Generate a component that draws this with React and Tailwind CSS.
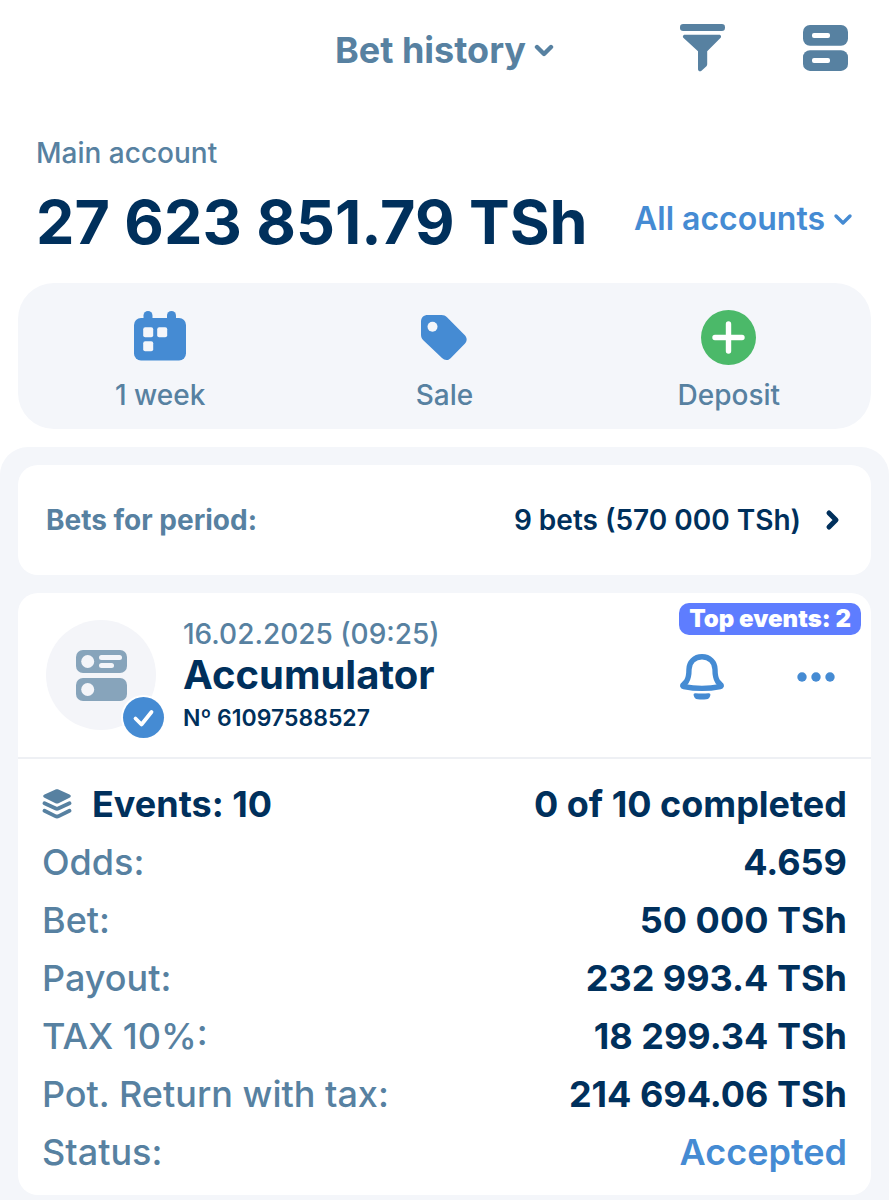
import React from "react";

const betDetails = [
  { label: "Odds:", value: "4.659" },
  { label: "Bet:", value: "50 000 TSh" },
  { label: "Payout:", value: "232 993.4 TSh" },
  { label: "TAX 10%:", value: "18 299.34 TSh" },
  { label: "Pot. Return with tax:", value: "214 694.06 TSh" },
  { label: "Status:", value: "Accepted", accent: true },
];

function ChevronDown({ className, strokeWidth }) {
  return (
    <svg viewBox="0 0 20 14" fill="none" className={className} aria-hidden="true">
      <path
        d="M3 4l7 7 7-7"
        stroke="currentColor"
        strokeWidth={strokeWidth}
        strokeLinecap="round"
        strokeLinejoin="round"
      />
    </svg>
  );
}

function FilterIcon() {
  return (
    <svg viewBox="0 0 45 48" fill="currentColor" className="w-[45px] h-12" aria-hidden="true">
      <rect x="0" y="0" width="45" height="7" rx="3.2" />
      <path d="M5 10.7h34c2 0 2.8 2 1.4 3.4L27.2 27.2V40c0 1.200-.4 2-1.300 2.800l-4.400 3.900c-1.300 1.100-3.500.4-3.500-1.500V27.200L3.600 14.100C2.200 12.700 3 10.700 5 10.700z" />
    </svg>
  );
}

function DrawersIcon() {
  return (
    <svg viewBox="0 0 45 46" fill="currentColor" className="w-[45px] h-[46px]" aria-hidden="true">
      <rect x="0" y="0" width="45" height="20.7" rx="7" />
      <rect x="0" y="25.2" width="45" height="20.7" rx="7" />
      <rect x="9" y="8" width="18" height="5" rx="2" fill="#fff" />
      <rect x="9" y="33" width="18" height="5" rx="2" fill="#fff" />
    </svg>
  );
}

function CalendarIcon() {
  return (
    <svg viewBox="0 0 52 53" className="w-[52px] h-[53px]" aria-hidden="true">
      <g fill="#458bd3">
        <rect x="9.5" y="0" width="9" height="16" rx="4.5" />
        <rect x="33" y="0" width="9" height="16" rx="4.5" />
        <rect x="0" y="7" width="52" height="42.5" rx="7" />
      </g>
      <g fill="#f4f6fa">
        <rect x="9.2" y="16.3" width="10" height="10" rx="2" />
        <rect x="23.2" y="16.3" width="10" height="10" rx="2" />
        <rect x="9.2" y="30.3" width="10" height="10" rx="2" />
      </g>
    </svg>
  );
}

function TagIcon() {
  return (
    <svg viewBox="0 0 46 46" className="w-[46px] h-[46px]" aria-hidden="true">
      <path
        fill="#458bd3"
        d="M7 0h13.500c2.300 0 3.900.7 5.500 2.300l17.600 17.600c2.700 2.700 2.700 6.200.2 8.800L29.600 43.200c-2.500 2.500-6 2.500-8.600-.1L2.300 25.200C.7 23.600 0 21.800 0 19.700V7c0-4.500 2.500-7 7-7z"
      />
      <circle cx="11.5" cy="11.7" r="5" fill="#f4f6fa" />
    </svg>
  );
}

function PlusIcon() {
  return (
    <svg viewBox="0 0 55 55" className="size-[55px]" aria-hidden="true">
      <circle cx="27.5" cy="27.5" r="27.5" fill="#4bb969" />
      <path d="M27.5 14v27M14 27.500h27" stroke="#fff" strokeWidth="5.4" strokeLinecap="round" />
    </svg>
  );
}

function AccumulatorIcon() {
  return (
    <svg viewBox="0 0 51 51" className="size-[51px]" aria-hidden="true">
      <rect x="0" y="0" width="51" height="23" rx="7" fill="#87a4bb" />
      <rect x="0" y="28" width="51" height="23" rx="7" fill="#87a4bb" />
      <g fill="#f4f5f9">
        <circle cx="11.7" cy="11.5" r="6.5" />
        <circle cx="11.7" cy="39.5" r="6.5" />
        <rect x="23" y="5" width="23" height="5" rx="2.5" />
        <rect x="23" y="13" width="15" height="5" rx="2.5" />
      </g>
    </svg>
  );
}

function CheckBadge() {
  return (
    <svg viewBox="0 0 45 45" className="absolute -right-2.5 -bottom-2.5 size-[45px]" aria-hidden="true">
      <circle cx="22.5" cy="22.5" r="22.5" fill="#fff" />
      <circle cx="22.5" cy="22.5" r="20.5" fill="#458bd3" />
      <path
        d="M14.500 23.500l6 6L30.500 17"
        fill="none"
        stroke="#fff"
        strokeWidth="3.8"
        strokeLinecap="round"
        strokeLinejoin="round"
      />
    </svg>
  );
}

function BellIcon() {
  return (
    <svg viewBox="0 0 44 46" fill="none" className="w-11 h-[46px]" aria-hidden="true">
      <path
        d="M22 2.800c-7.500 0-13 5.300-13 12.500 0 6-.8 9.500-2.600 12.200L3.200 30.800c-.8 1-.4 1.600.6 1.800C15 34.800 29 34.800 40.200 32.600c1-.2 1.400-.8.6-1.800l-3.200-3.300C35.800 24.800 35 21.300 35 15.300 35 8.100 29.500 2.800 22 2.800z"
        stroke="#458bd3"
        strokeWidth="5.4"
        strokeLinejoin="round"
      />
      <path
        d="M15.500 39.200c4.300.4 8.700.4 13 0 1.500-.1 2.200.8 1.800 2.200-.6 2.200-1.800 3.600-4 3.900-2.900.4-5.700.4-8.600 0-2.200-.3-3.400-1.700-4-3.900-.4-1.400.3-2.300 1.800-2.200z"
        fill="#458bd3"
      />
    </svg>
  );
}

function DotsIcon() {
  return (
    <svg viewBox="0 0 38 10" fill="#458bd3" className="w-[38px] h-2.5" aria-hidden="true">
      <circle cx="5" cy="5" r="4.7" />
      <circle cx="19" cy="5" r="4.7" />
      <circle cx="33" cy="5" r="4.7" />
    </svg>
  );
}

function LayersIcon() {
  return (
    <svg viewBox="-1 0 30 30" className="size-[30px]" aria-hidden="true">
      <path
        d="M12 .7c1.400-.6 2.600-.6 4 0l10.500 4.800c1.800.9 1.800 2.300 0 3.200L16 14c-1.400.7-2.600.7-4 0L1.500 8.700C-.3 7.800-.3 6.400 1.500 5.500z"
        fill="#5781a1"
      />
      <path
        d="M1.500 14.200l10.800 5.100c1.200.6 2.200.6 3.400 0l10.800-5.100M1.500 21.800l10.800 5.300c1.200.6 2.200.6 3.400 0l10.800-5.300"
        fill="none"
        stroke="#5781a1"
        strokeWidth="3.8"
        strokeLinecap="round"
        strokeLinejoin="round"
      />
    </svg>
  );
}

const actions = [
  { label: "1 week", icon: <CalendarIcon /> },
  { label: "Sale", icon: <TagIcon /> },
  { label: "Deposit", icon: <PlusIcon /> },
];

function Header() {
  return (
    <header className="grid grid-cols-[1fr_auto_1fr] items-center h-24 px-[41px]">
      <button className="col-start-2 flex items-center gap-2 pt-1 text-4xl font-bold">
        Bet history
        <ChevronDown className="w-5 h-3.5" strokeWidth={4.4} />
      </button>
      <div className="flex items-center justify-end gap-[78px]">
        <button aria-label="Filter">
          <FilterIcon />
        </button>
        <button aria-label="View">
          <DrawersIcon />
        </button>
      </div>
    </header>
  );
}

function Balance() {
  return (
    <section className="px-9 pt-10">
      <p className="text-[28px] leading-[34px] font-medium">Main account</p>
      <div className="flex items-center justify-between mt-3">
        <p className="pt-0.5 text-[61px] leading-[76px] font-bold text-[#00305c]">27 623 851.79 TSh</p>
        <button className="flex items-center gap-2 pb-1 text-[32px] font-semibold text-[#458bd3]">
          All accounts
          <ChevronDown className="w-5 h-3.5" strokeWidth={3.4} />
        </button>
      </div>
    </section>
  );
}

function BetCard() {
  return (
    <article className="relative bg-white rounded-[20px] pb-3.5">
      <span className="absolute top-2.5 right-2.5 h-8 px-2.5 rounded-[10px] bg-[#5e7dff] text-white text-2xl leading-8 font-black">
        Top events: 2
      </span>
      <div className="flex items-center px-7 h-[166px] border-b-2 border-[#eef0f4]">
        <div className="relative flex items-center justify-center size-[110px] rounded-full bg-[#f4f5f9]">
          <AccumulatorIcon />
          <CheckBadge />
        </div>
        <div className="ml-[27px] pt-1">
          <p className="text-[28px] leading-9 font-medium">16.02.2025 (09:25)</p>
          <h2 className="text-[40px] leading-[46px] font-bold text-[#00305c]">Accumulator</h2>
          <p className="text-[23px] leading-10 font-semibold text-[#00305c]">Nº 61097588527</p>
        </div>
        <div className="flex items-center gap-[73px] ml-auto pt-1 pr-2">
          <button aria-label="Notifications">
            <BellIcon />
          </button>
          <button aria-label="More">
            <DotsIcon />
          </button>
        </div>
      </div>
      <dl className="px-6 pt-4 text-4xl">
        <div className="flex justify-between leading-[58px] font-bold text-[#00305c]">
          <dt className="flex items-center gap-5">
            <LayersIcon />
            Events: 10
          </dt>
          <dd>0 of 10 completed</dd>
        </div>
        {betDetails.map((row) => (
          <div key={row.label} className="flex justify-between leading-[58px]">
            <dt className="font-medium">{row.label}</dt>
            <dd className={row.accent ? "font-semibold text-[#458bd3]" : "font-bold text-[#00305c]"}>
              {row.value}
            </dd>
          </div>
        ))}
      </dl>
    </article>
  );
}

function App() {
  return (
    <div className="flex flex-col min-h-screen bg-white font-['Inter',sans-serif] text-[#5781a1]">
      <Header />
      <Balance />
      <nav className="grid grid-cols-3 mx-[18px] mt-[23px] pt-[27px] pb-4 rounded-[36px] bg-[#f4f6fa]">
        {actions.map((action) => (
          <button key={action.label} className="flex flex-col items-center gap-3">
            <span className="flex items-center justify-center h-[55px]">{action.icon}</span>
            <span className="text-[28px] leading-9 font-medium">{action.label}</span>
          </button>
        ))}
      </nav>
      <main className="flex flex-col flex-1 gap-[18px] mt-[18px] px-[18px] pt-[18px] pb-[5px] rounded-t-[28px] bg-[#f4f6fa]">
        <button className="flex items-center h-[110px] px-7 rounded-[20px] bg-white text-[28px]">
          <span className="font-bold">Bets for period:</span>
          <span className="ml-auto font-semibold text-[#00305c]">9 bets (570 000 TSh)</span>
          <svg viewBox="0 0 16 22" fill="none" className="w-4 h-[22px] ml-6 mr-0.5" aria-hidden="true">
            <path d="M4 4l7 7-7 7" stroke="#00305c" strokeWidth="5" strokeLinecap="round" strokeLinejoin="round" />
          </svg>
        </button>
        <BetCard />
      </main>
    </div>
  );
}

export default App;
